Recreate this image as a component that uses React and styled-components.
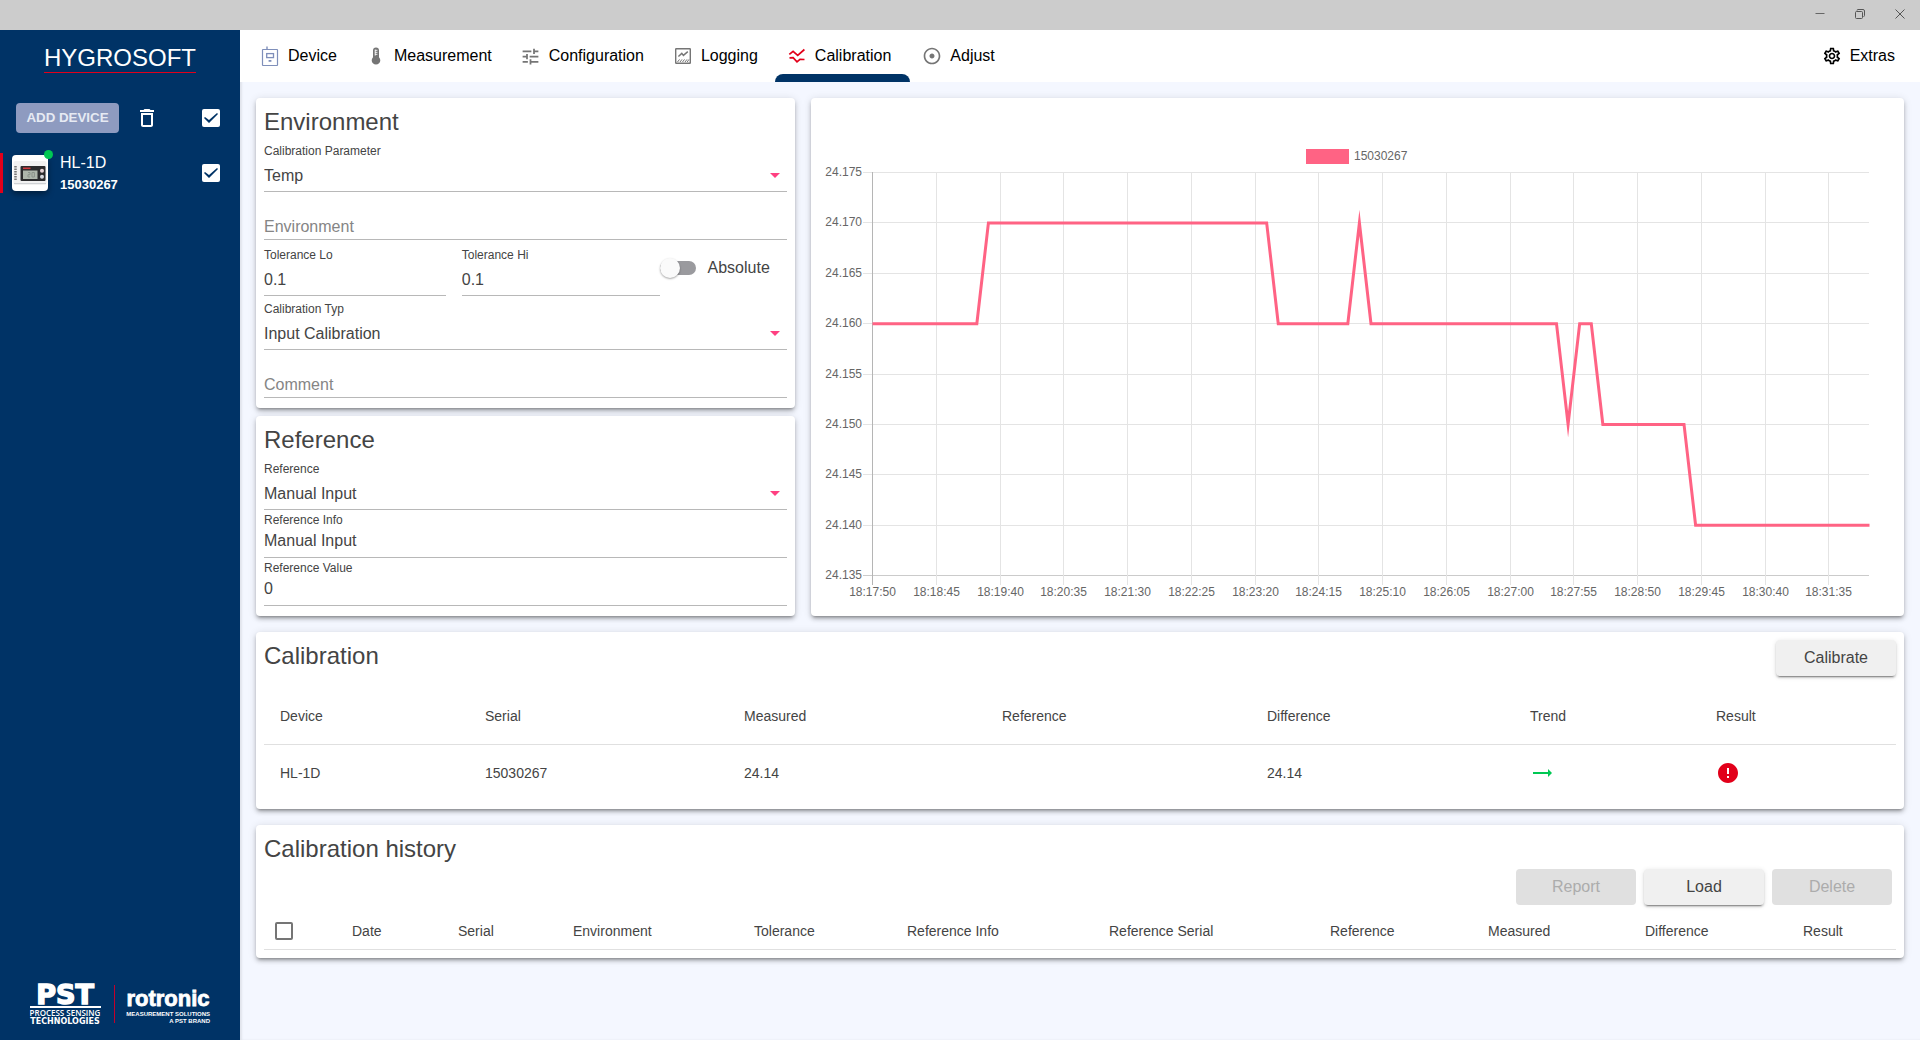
import { useLayoutEffect, useRef, useState } from 'react';
import styled, { createGlobalStyle } from 'styled-components';
import {
  MdAdjust,
  MdDeleteOutline,
  MdError,
  MdOutlineSettings,
  MdTrendingFlat,
  MdTune,
} from 'react-icons/md';

const DeviceIcon = () => (
  <svg width="24" height="24" viewBox="0 0 24 24" fill="none" stroke="#7f8fba">
    <rect x="4.5" y="5.5" width="15" height="16" rx="0.5" strokeWidth="1.2" />
    <path d="M9 2.5V5.5" strokeWidth="1.4" />
    <rect x="8.7" y="9.6" width="6.8" height="4" strokeWidth="1.3" />
    <path d="M10.6 16h2.8v1.8h-2.8z" fill="#7f8fba" stroke="none" />
  </svg>
);

const ThermometerIcon = () => (
  <svg width="24" height="24" viewBox="0 0 24 24">
    <path
      d="M9 6.5a3 3 0 0 1 6 0v6.7a4.3 4.3 0 1 1-6 0z"
      fill="#757575"
    />
    <path d="M11 6.3h2.4M11 8.3h2.4M11 10.3h2.4M11.2 5.6v6" stroke="#fff" strokeWidth="0.9" />
  </svg>
);

const LoggingIcon = () => (
  <svg width="24" height="24" viewBox="0 0 24 24" fill="none" stroke="#757575">
    <rect x="4.7" y="4.7" width="14.6" height="14.6" rx="0.5" strokeWidth="1.4" />
    <path d="M7.4 12.6L10.8 9.4l1.6 2L16.8 7.6" strokeWidth="1.4" />
    <path
      d="M6.5 18l2-2.6M9 18l2-2.6M11.5 18l2-2.6M14 18l2-2.6M16.2 18l1.8-2.6"
      strokeWidth="1"
    />
  </svg>
);

const CalibrationIcon = () => (
  <svg width="24" height="24" viewBox="0 0 24 24" fill="none" stroke="#e2001a" strokeWidth="1.7">
    <path d="M4.3 10.4L8.1 7.4l4.6 3.9L19.4 5.5" />
    <path d="M4.5 13.9l3.6-.2 3.9 4.2 3-2.5 4.5.1" />
  </svg>
);

const DeviceThumb = () => (
  <svg width="36" height="36" viewBox="0 0 36 36">
    <rect x="1.5" y="6" width="33" height="24" rx="2" fill="#f1f1f1" />
    <path d="M2 28.5h32" stroke="#cfd2d5" strokeWidth="1" />
    <path d="M3.5 11v14" stroke="#777" strokeWidth="2.5" strokeDasharray="1.5 1" />
    <rect x="8.5" y="11" width="25" height="15" rx="1" fill="#2b2b2d" />
    <path d="M11 13.3h7.5" stroke="#d03a3f" strokeWidth="1.6" />
    <rect x="11" y="15.5" width="14.5" height="8.5" fill="#aeb6ab" />
    <path d="M16 17.5h2v2.2h-2v2.3h2M20 22v-4.5h2.4V22z" fill="none" stroke="#8b938b" />
    <circle cx="30" cy="15.7" r="2" fill="#e6d3d6" />
    <circle cx="30" cy="21.7" r="2" fill="#d5d8de" />
  </svg>
);

const BrandLogos = () => (
  <svg width="184" height="52" viewBox="0 0 184 52" fill="#fff" role="img" aria-label="PST rotronic">
    <LogoText
      x="37"
      y="30"
      $size={27}
      $face="DejaVu Sans"
      textAnchor="middle"
      stroke="#fff"
      strokeWidth="1.5"
    >
      PST
    </LogoText>
    <path d="M2 32h71v2H2z" />
    <LogoText x="37" y="42" $size={8} $face="Open Sans" $weight={600} textAnchor="middle">
      PROCESS SENSING
    </LogoText>
    <LogoText x="37" y="50" $size={8} $face="DejaVu Sans" textAnchor="middle">
      TECHNOLOGIES
    </LogoText>
    <path d="M86 11h1v38h-1z" fill="#c4002b" />
    <LogoText
      x="140"
      y="32"
      $size={22}
      $face="Liberation Sans"
      textAnchor="middle"
      stroke="#fff"
      strokeWidth="0.8"
    >
      rotronic
    </LogoText>
    <LogoText x="182" y="42" $size={6} $face="Liberation Sans" textAnchor="end">
      MEASUREMENT SOLUTIONS
    </LogoText>
    <LogoText x="182" y="49" $size={6} $face="Liberation Sans" textAnchor="end">
      A PST BRAND
    </LogoText>
  </svg>
);

const tabs = [
  { name: 'Device', icon: <DeviceIcon /> },
  { name: 'Measurement', icon: <ThermometerIcon /> },
  { name: 'Configuration', icon: <MdTune size={21} color="#757575" /> },
  { name: 'Logging', icon: <LoggingIcon /> },
  { name: 'Calibration', icon: <CalibrationIcon />, active: true },
  { name: 'Adjust', icon: <MdAdjust size={20} color="#757575" /> },
];

const timeLabels = [
  '18:17:50', '18:18:45', '18:19:40', '18:20:35', '18:21:30', '18:22:25',
  '18:23:20', '18:24:15', '18:25:10', '18:26:05', '18:27:00', '18:27:55',
  '18:28:50', '18:29:45', '18:30:40', '18:31:35',
];

const valueLabels = [
  '24.175', '24.170', '24.165', '24.160', '24.155', '24.150', '24.145', '24.140', '24.135',
];

// [sample index, value], one sample every 10 s
const samples = [
  [0, 24.16], [9, 24.16], [10, 24.17], [34, 24.17], [35, 24.16], [41, 24.16],
  [42, 24.17], [43, 24.16], [59, 24.16], [60, 24.15], [61, 24.16], [62, 24.16],
  [63, 24.15], [70, 24.15], [71, 24.14], [86, 24.14],
];

const CHART_HEIGHT = 518;
const PLOT = { left: 61, right: 35, top: 74, bottom: 477 };

const TempChart = () => {
  const box = useRef(null);
  const [width, setWidth] = useState(1093);

  useLayoutEffect(() => {
    const measure = () => setWidth(Math.round(box.current.getBoundingClientRect().width));
    measure();
    window.addEventListener('resize', measure);
    return () => window.removeEventListener('resize', measure);
  }, []);

  const plotWidth = width - PLOT.left - PLOT.right;
  const plotRight = PLOT.left + plotWidth;
  const plotHeight = PLOT.bottom - PLOT.top;
  const step = plotWidth / 86;
  const toX = (index) => PLOT.left + index * step;
  const toY = (value) => PLOT.top + ((24.175 - value) / 0.04) * plotHeight;
  const points = samples.map(([i, v]) => `${toX(i) + 0.5},${toY(v) + 0.5}`).join(' ');
  const legendX = Math.round(width / 2) - 52;

  return (
    <ChartBox ref={box}>
      <ChartSvg width={width} height={CHART_HEIGHT}>
        <rect x={legendX} y="51" width="43" height="15" fill="#ff6384" />
        <text x={legendX + 48} y="62">15030267</text>
        {valueLabels.map((label, i) => {
          const y = Math.round(PLOT.top + (plotHeight / 8) * i) + 0.5;
          return (
            <g key={label}>
              <path
                d={`M${PLOT.left - 9} ${y}H${plotRight}`}
                stroke={i === 8 ? '#cbcbcb' : '#e4e4e4'}
              />
              <text x={PLOT.left - 10} y={y + 3} textAnchor="end">{label}</text>
            </g>
          );
        })}
        {timeLabels.map((label, i) => {
          const x = Math.round(toX(i * 5.5)) + 0.5;
          return (
            <g key={label}>
              <path
                d={`M${x} ${PLOT.top}V${PLOT.bottom + 10}`}
                stroke={i === 0 ? '#b5b5b5' : '#e4e4e4'}
              />
              <text x={x} y={PLOT.bottom + 21} textAnchor="middle">{label}</text>
            </g>
          );
        })}
        <polyline
          points={points}
          fill="none"
          stroke="#ff6384"
          strokeWidth="3"
          strokeMiterlimit="10"
        />
      </ChartSvg>
    </ChartBox>
  );
};

const SelectField = ({ id, label, value }) => (
  <Field $variant="select">
    <FieldLabel htmlFor={id}>{label}</FieldLabel>
    <SelectWrap>
      <Select id={id} defaultValue={value}>
        <option>{value}</option>
      </Select>
    </SelectWrap>
  </Field>
);

const TextField = ({ id, label, value, variant = 'text' }) => (
  <Field $variant={variant}>
    <FieldLabel htmlFor={id}>{label}</FieldLabel>
    <TextInput id={id} defaultValue={value} />
  </Field>
);

const App = () => {
  return (
    <>
      <GlobalStyle />
      <Window>
        <TitleBar>
          <WindowButton aria-label="Minimize">
            <svg width="10" height="10" viewBox="0 0 10 10" stroke="#666">
              <path d="M0.5 4.5h9" />
            </svg>
          </WindowButton>
          <WindowButton aria-label="Restore">
            <svg width="10" height="10" viewBox="0 0 10 10" fill="none" stroke="#555">
              <rect x="0.5" y="2.5" width="7" height="7" rx="1" />
              <path d="M2 1.5a1 1 0 0 1 1-1h5a1.5 1.5 0 0 1 1.5 1.5v4.5a1 1 0 0 1-1 1" />
            </svg>
          </WindowButton>
          <WindowButton aria-label="Close">
            <svg width="10" height="10" viewBox="0 0 10 10" stroke="#555">
              <path d="M0.5 0.5l9 9M9.5 0.5l-9 9" />
            </svg>
          </WindowButton>
        </TitleBar>
        <Body>
          <Sidebar>
            <Brand>HYGROSOFT</Brand>
            <SidebarTools>
              <AddButton>ADD DEVICE</AddButton>
              <IconButton aria-label="Remove device">
                <MdDeleteOutline size={24} />
              </IconButton>
              <SideCheckbox type="checkbox" aria-label="Select all devices" defaultChecked />
            </SidebarTools>
            <DeviceRow>
              <Thumb>
                <DeviceThumb />
                <StatusDot />
              </Thumb>
              <DeviceText htmlFor="device-hl1d">
                <DeviceName>HL-1D</DeviceName>
                <DeviceSerial>15030267</DeviceSerial>
              </DeviceText>
              <SideCheckbox type="checkbox" id="device-hl1d" defaultChecked />
            </DeviceRow>
            <Logos>
              <BrandLogos />
            </Logos>
          </Sidebar>
          <Main>
            <NavBar>
              {tabs.map((tab) => (
                <Tab href="#" key={tab.name} $active={tab.active}>
                  <TabContent $active={tab.active}>
                    <TabIcon>{tab.icon}</TabIcon>
                    {tab.name}
                  </TabContent>
                </Tab>
              ))}
              <Spacer />
              <Tab href="#">
                <TabContent>
                  <TabIcon>
                    <MdOutlineSettings size={20} />
                  </TabIcon>
                  Extras
                </TabContent>
              </Tab>
            </NavBar>
            <Content>
              <TopGrid>
                <FormColumn>
                  <FormCard>
                    <CardTitle>Environment</CardTitle>
                    <SelectField id="parameter" label="Calibration Parameter" value="Temp" />
                    <Field $variant="empty">
                      <TextInput placeholder="Environment" aria-label="Environment" />
                    </Field>
                    <ToleranceRow>
                      <ToleranceLo>
                        <TextField id="tol-lo" label="Tolerance Lo" value="0.1" variant="tall" />
                      </ToleranceLo>
                      <TextField id="tol-hi" label="Tolerance Hi" value="0.1" variant="tall" />
                      <ToggleLabel>
                        <Toggle type="checkbox" role="switch" />
                        Absolute
                      </ToggleLabel>
                    </ToleranceRow>
                    <SelectField id="cal-type" label="Calibration Typ" value="Input Calibration" />
                    <Field $variant="empty">
                      <TextInput placeholder="Comment" aria-label="Comment" />
                    </Field>
                  </FormCard>
                  <FormCard>
                    <CardTitle>Reference</CardTitle>
                    <SelectField id="reference" label="Reference" value="Manual Input" />
                    <TextField id="ref-info" label="Reference Info" value="Manual Input" />
                    <TextField id="ref-value" label="Reference Value" value="0" />
                  </FormCard>
                </FormColumn>
                <ChartCard>
                  <TempChart />
                </ChartCard>
              </TopGrid>

              <Card>
                <CardHead>
                  <CardTitle>Calibration</CardTitle>
                  <RaisedButton>Calibrate</RaisedButton>
                </CardHead>
                <Table>
                  <colgroup>
                    {[221, 259, 258, 265, 263, 186, 180].map((w, i) => (
                      <col key={i} width={w} />
                    ))}
                  </colgroup>
                  <thead>
                    <Row $height={56} $line>
                      <FirstHead>Device</FirstHead>
                      <Head>Serial</Head>
                      <Head>Measured</Head>
                      <Head>Reference</Head>
                      <Head>Difference</Head>
                      <Head>Trend</Head>
                      <Head>Result</Head>
                    </Row>
                  </thead>
                  <tbody>
                    <Row $height={57}>
                      <FirstCell>HL-1D</FirstCell>
                      <Cell>15030267</Cell>
                      <Cell>24.14</Cell>
                      <Cell />
                      <Cell>24.14</Cell>
                      <Cell>
                        <MdTrendingFlat size={24} color="#00c853" title="Stable" />
                      </Cell>
                      <Cell>
                        <MdError size={24} color="#e2001a" title="Failed" />
                      </Cell>
                    </Row>
                  </tbody>
                </Table>
              </Card>

              <Card>
                <CardTitle>Calibration history</CardTitle>
                <Actions>
                  <RaisedButton disabled>Report</RaisedButton>
                  <RaisedButton>Load</RaisedButton>
                  <RaisedButton disabled>Delete</RaisedButton>
                </Actions>
                <Table>
                  <colgroup>
                    {[88, 106, 115, 181, 153, 202, 221, 158, 157, 158, 93].map((w, i) => (
                      <col key={i} width={w} />
                    ))}
                  </colgroup>
                  <thead>
                    <Row $height={36} $line>
                      <CheckHead>
                        <Checkbox type="checkbox" aria-label="Select all entries" />
                      </CheckHead>
                      <Head>Date</Head>
                      <Head>Serial</Head>
                      <Head>Environment</Head>
                      <Head>Tolerance</Head>
                      <Head>Reference Info</Head>
                      <Head>Reference Serial</Head>
                      <Head>Reference</Head>
                      <Head>Measured</Head>
                      <Head>Difference</Head>
                      <Head>Result</Head>
                    </Row>
                  </thead>
                </Table>
              </Card>
            </Content>
          </Main>
        </Body>
      </Window>
    </>
  );
};

export default App;

const GlobalStyle = createGlobalStyle`
  *, *::before, *::after {
    box-sizing: border-box;
  }

  body {
    margin: 0;
    color: #444;
    font-family: 'Liberation Sans', Arial, sans-serif;
    font-size: 16px;
  }

  button, input, select {
    font-family: inherit;
  }
`;

const Window = styled.div`
  display: flex;
  flex-direction: column;
  min-height: 100vh;
`;

const TitleBar = styled.header`
  display: flex;
  justify-content: flex-end;
  height: 30px;
  background: #ccc;
`;

const WindowButton = styled.button`
  display: flex;
  align-items: center;
  justify-content: center;
  width: 40px;
  height: 28px;
  padding: 0;
  border: none;
  background: none;
`;

const Body = styled.div`
  display: flex;
  flex: 1;
`;

const Sidebar = styled.aside`
  display: flex;
  flex-direction: column;
  flex: none;
  width: 240px;
  color: #fff;
  background: #003366;
`;

const Brand = styled.h1`
  align-self: center;
  margin: 14px 0 30px;
  border-bottom: 1px solid #e2001a;
  font-size: 24px;
  font-weight: 400;
  line-height: 28px;
`;

const SidebarTools = styled.div`
  display: flex;
  align-items: center;
  padding: 0 20px 0 16px;
`;

const AddButton = styled.button`
  width: 103px;
  height: 30px;
  padding: 0 0 2px;
  border: none;
  border-radius: 4px;
  color: #e6eaf3;
  background: #8e9bc0;
  font-weight: 700;
  white-space: nowrap;
`;

const IconButton = styled.button`
  display: flex;
  margin: 0 auto 0 16px;
  padding: 0;
  border: none;
  color: inherit;
  background: none;
`;

const Checkbox = styled.input`
  appearance: none;
  display: block;
  width: 18px;
  height: 18px;
  margin: 0;
  border: 2px solid #757575;
  border-radius: 2px;
  background: #fff;
`;

const SideCheckbox = styled(Checkbox)`
  border: none;

  &:checked::before {
    content: '';
    display: block;
    width: 18px;
    height: 18px;
    background: #003366;
    clip-path: polygon(7px 14px, 2px 9px, 3px 8px, 7px 11px, 15px 4px, 16px 5px);
  }
`;

const DeviceRow = styled.div`
  display: flex;
  align-items: center;
  height: 40px;
  margin-top: 20px;
  padding: 0 20px 0 9px;
  border-left: 3px solid #e2001a;
`;

const Thumb = styled.div`
  position: relative;
  width: 36px;
  height: 36px;
  border-radius: 4px;
  background: #fff;
  box-shadow: 0 3px 6px rgba(0, 0, 0, 0.4);
`;

const StatusDot = styled.span`
  position: absolute;
  top: -5px;
  right: -5px;
  width: 9px;
  height: 9px;
  border-radius: 50%;
  background: #00c853;
`;

const DeviceText = styled.label`
  display: flex;
  flex: 1;
  flex-direction: column;
  gap: 4px;
  margin-left: 12px;
`;

const DeviceName = styled.span`
  font-size: 16px;
  line-height: 20px;
`;

const DeviceSerial = styled.span`
  font-size: 13px;
  font-weight: 700;
  line-height: 16px;
`;

const Logos = styled.div`
  margin-top: auto;
  padding: 0 28px 14px;

  svg {
    display: block;
  }
`;

const LogoText = styled.text`
  font-family: '${(props) => props.$face}', sans-serif;
  font-size: ${(props) => props.$size}px;
  font-weight: ${(props) => props.$weight || 700};
`;

const Main = styled.main`
  flex: 1;
  min-width: 0;
  background: #f4f7ff;
  box-shadow: inset 2px 0 2px rgba(0, 0, 0, 0.08);
`;

const NavBar = styled.nav`
  display: flex;
  height: 52px;
  padding: 0 8px;
  background: #fff;
`;

const Tab = styled.a`
  display: grid;
  grid-template-rows: 8px 1fr 8px;
  color: #000;
  font-size: 16px;
  text-decoration: none;

  &::after {
    content: '';
    grid-row: 3;
    border-radius: 8px 8px 0 0;
    background: ${(props) => (props.$active ? '#003366' : 'transparent')};
  }
`;

const TabContent = styled.span`
  grid-row: 2;
  display: flex;
  align-items: center;
  gap: 6px;
  padding: 0 ${(props) => (props.$active ? 19 : 17)}px 0 10px;
  line-height: 20px;
`;

const TabIcon = styled.span`
  display: flex;
  align-items: center;
  justify-content: center;
  width: 24px;
  height: 24px;
`;

const Spacer = styled.div`
  flex: 1;
`;

const Content = styled.div`
  display: flex;
  flex-direction: column;
  gap: 16px;
  padding: 16px;
`;

const TopGrid = styled.div`
  display: grid;
  grid-template-columns: 33fr 67fr;
  gap: 16px;
`;

const FormColumn = styled.div`
  display: flex;
  flex-direction: column;
  gap: 8px;
  min-width: 0;
`;

const Card = styled.section`
  padding: 8px;
  border-radius: 4px;
  background: #fff;
  box-shadow:
    0 3px 3px -2px rgba(0, 0, 0, 0.3),
    0 3px 4px 0 rgba(0, 0, 0, 0.2),
    0 1px 8px 0 rgba(0, 0, 0, 0.12);
`;

const FormCard = styled(Card)`
  padding-bottom: 10px;
`;

const ChartCard = styled(Card)`
  min-width: 0;
  padding: 0;
`;

const CardHead = styled.div`
  display: flex;
  align-items: flex-start;
  justify-content: space-between;
  height: 48px;
`;

const CardTitle = styled.h2`
  margin: 0;
  font-size: 24px;
  font-weight: 400;
  line-height: 32px;
`;

const fieldPadding = {
  select: '5px 0 6px',
  tall: '7px 0 5px',
  text: '2px 0 6px',
  empty: '25px 0 2px',
};

const fieldGap = {
  select: 6,
  tall: 7,
  text: 3,
  empty: 0,
};

const Field = styled.div`
  display: flex;
  flex-direction: column;
  gap: ${(props) => fieldGap[props.$variant]}px;
  padding: ${(props) => fieldPadding[props.$variant]};
  border-bottom: 1px solid #b8b8b8;
`;

const FieldLabel = styled.label`
  font-size: 12px;
  line-height: 16px;
`;

const TextInput = styled.input`
  width: 100%;
  height: 20px;
  padding: 0;
  border: none;
  outline: none;
  color: inherit;
  background: none;
  font-size: 16px;

  &::placeholder {
    color: #858585;
  }
`;

const SelectWrap = styled.div`
  display: grid;
  align-items: center;

  &::after {
    content: '';
    grid-area: 1 / 1;
    justify-self: end;
    margin-right: 7px;
    border: 5px solid transparent;
    border-top-color: #ff4081;
    border-bottom: none;
    pointer-events: none;
  }
`;

const Select = styled.select`
  appearance: none;
  grid-area: 1 / 1;
  width: 100%;
  height: 20px;
  padding: 0;
  border: none;
  color: inherit;
  background: none;
  font-size: 16px;
`;

const ToleranceRow = styled.div`
  display: grid;
  grid-template-columns: 1fr 1fr 127px;
`;

const ToleranceLo = styled.div`
  margin-right: 16px;
`;

const ToggleLabel = styled.label`
  display: flex;
  align-items: center;
  gap: 12px;
`;

const Toggle = styled.input`
  appearance: none;
  display: flex;
  align-items: center;
  width: 36px;
  height: 14px;
  margin: 0;
  border-radius: 7px;
  background: #9a9a9e;

  &::before {
    content: '';
    flex: none;
    width: 20px;
    height: 20px;
    border-radius: 50%;
    background: #fafafa;
    box-shadow: 0 1px 2px rgba(0, 0, 0, 0.35);
  }
`;

const ChartBox = styled.div`
  overflow: hidden;
`;

const ChartSvg = styled.svg`
  display: block;

  text {
    fill: #666;
    font-size: 12px;
  }
`;

const RaisedButton = styled.button`
  width: 120px;
  height: 36px;
  padding: 0;
  border: none;
  border-radius: 4px;
  color: #444;
  background: #f0f0f0;
  font-size: 16px;
  box-shadow:
    0 3px 1px -2px rgba(0, 0, 0, 0.3),
    0 2px 2px 0 rgba(0, 0, 0, 0.16),
    0 1px 5px 0 rgba(0, 0, 0, 0.12);

  &:disabled {
    color: #acacac;
    background: #e0e0e0;
    box-shadow: none;
  }
`;

const Actions = styled.div`
  display: flex;
  justify-content: flex-end;
  gap: 8px;
  margin: 4px 4px 8px 0;
`;

const Table = styled.table`
  width: 100%;
  border-collapse: collapse;
  table-layout: fixed;
  font-size: 14px;
`;

const Row = styled.tr`
  height: ${(props) => props.$height}px;
  border-bottom: ${(props) => (props.$line ? '1px solid #e0e0e0' : 'none')};
`;

const Head = styled.th`
  padding: 0;
  font-weight: 400;
  text-align: left;
`;

const FirstHead = styled(Head)`
  padding-left: 16px;
`;

const CheckHead = styled(Head)`
  padding-left: 11px;
`;

const Cell = styled.td`
  padding: 0;

  svg {
    display: block;
  }
`;

const FirstCell = styled(Cell)`
  padding-left: 16px;
`;
